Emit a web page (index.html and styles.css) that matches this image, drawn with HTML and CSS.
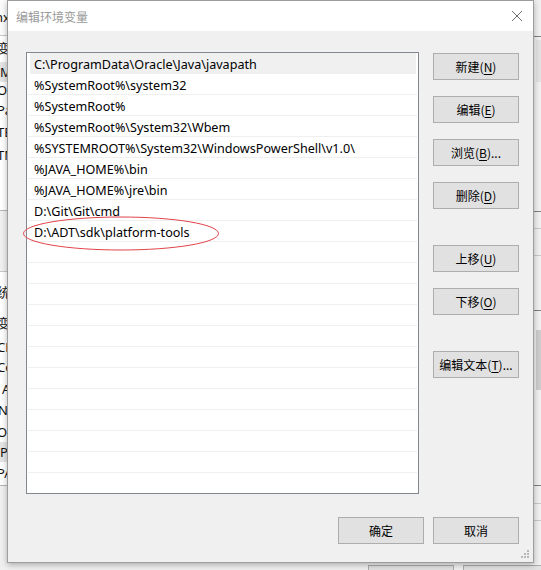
FILE: index.html
```html
<!DOCTYPE html>
<html lang="zh-CN">
<head>
<meta charset="utf-8">
<title>编辑环境变量</title>
<link rel="stylesheet" href="styles.css">
</head>
<body>
<div class="desktop">
  <div class="bgwin">
    <div class="bg-left-top"><span class="bg-t t1">nx</span></div>
    <div class="bg-left-list">
      <span class="bg-t t2">变</span>
      <span class="bg-t t3 hl">M</span>
      <span class="bg-t t4">Or</span>
      <span class="bg-t t5">Pa</span>
      <span class="bg-t t6">TE</span>
      <span class="bg-t t7">TM</span>
    </div>
    <div class="bg-left-gap"></div>
    <div class="bg-left-list2">
      <span class="bg-t u1">统</span>
      <span class="bg-t u2">变</span>
      <span class="bg-t u3">CL</span>
      <span class="bg-t u4">Co</span>
      <span class="bg-t u5">A</span>
      <span class="bg-t u6">N</span>
      <span class="bg-t u7">O</span>
      <span class="bg-t u8 hl">Pa</span>
      <span class="bg-t u9">PA</span>
    </div>
    <div class="bg-right">
      <div class="bg-r-line r1"></div>
      <div class="bg-r-scroll s1"></div>
      <div class="bg-r-line r2"></div>
      <div class="bg-r-line r3"></div>
      <div class="bg-r-line r4"></div>
      <div class="bg-r-line r5"></div>
      <div class="bg-r-scroll s2"></div>
      <div class="bg-r-line r6"></div>
      <div class="bg-r-line r7"></div>
      <div class="bg-r-line r8"></div>
    </div>
    <div class="bg-btn b1"></div>
    <div class="bg-btn b2"></div>
  </div>

  <div class="dialog">
    <div class="titlebar">
      <span class="title">编辑环境变量</span>
      <svg class="close" width="12" height="12" viewBox="0 0 12 12"><path d="M1 1 L11 11 M11 1 L1 11" stroke="#6b6b6b" stroke-width="1" fill="none"/></svg>
    </div>
    <div class="body">
      <div class="main">
        <div class="list">
          <div class="row sel">C:\ProgramData\Oracle\Java\javapath</div>
          <div class="row">%SystemRoot%\system32</div>
          <div class="row">%SystemRoot%</div>
          <div class="row">%SystemRoot%\System32\Wbem</div>
          <div class="row">%SYSTEMROOT%\System32\WindowsPowerShell\v1.0\</div>
          <div class="row">%JAVA_HOME%\bin</div>
          <div class="row">%JAVA_HOME%\jre\bin</div>
          <div class="row">D:\Git\Git\cmd</div>
          <div class="row">D:\ADT\sdk\platform-tools</div>
          <div class="row"></div>
          <div class="row"></div>
          <div class="row"></div>
          <div class="row"></div>
          <div class="row"></div>
          <div class="row"></div>
          <div class="row"></div>
          <div class="row"></div>
          <div class="row"></div>
          <div class="row"></div>
          <div class="row"></div>
          <div class="row last"></div>
        </div>
        <div class="side">
          <button class="btn">新建(<u>N</u>)</button>
          <button class="btn">编辑(<u>E</u>)</button>
          <button class="btn">浏览(<u>B</u>)...</button>
          <button class="btn">删除(<u>D</u>)</button>
          <button class="btn sep">上移(<u>U</u>)</button>
          <button class="btn">下移(<u>O</u>)</button>
          <button class="btn sep">编辑文本(<u>T</u>)...</button>
        </div>
      </div>
      <div class="footer">
        <button class="btn">确定</button>
        <button class="btn">取消</button>
      </div>
    </div>
    <svg class="grip" width="9" height="9" viewBox="0 0 9 9">
      <rect x="6" y="0" width="2" height="2" fill="#b9b9b9"/>
      <rect x="3" y="3" width="2" height="2" fill="#b9b9b9"/>
      <rect x="6" y="3" width="2" height="2" fill="#b9b9b9"/>
      <rect x="0" y="6" width="2" height="2" fill="#b9b9b9"/>
      <rect x="3" y="6" width="2" height="2" fill="#b9b9b9"/>
      <rect x="6" y="6" width="2" height="2" fill="#b9b9b9"/>
    </svg>
  </div>

  <svg class="mark" width="541" height="570" viewBox="0 0 541 570">
    <ellipse cx="121" cy="233.5" rx="97.5" ry="16.5" fill="none" stroke="#e2444a" stroke-width="1"/>
  </svg>
</div>
</body>
</html>
```

FILE: styles.css
```css
* { box-sizing: border-box; }
html, body { margin: 0; padding: 0; }
body {
  width: 541px;
  height: 570px;
  overflow: hidden;
  background: #f0f0f0;
  font-family: "Noto Sans", "Noto Sans CJK SC", sans-serif;
  font-size: 12px;
  color: #000;
}
.desktop {
  position: relative;
  width: 541px;
  height: 570px;
  overflow: hidden;
}

/* background window pieces */
.bgwin { position: absolute; inset: 0; }
.bg-left-top {
  position: absolute; left: 0; top: 0; width: 20px; height: 36px;
  background: #fbfbfb; border-bottom: 1px solid #c8c8c8;
}
.bg-left-list {
  position: absolute; left: 0; top: 36px; width: 20px; height: 175px;
  background: #ffffff; border-bottom: 1px solid #b5b5b5;
}
.bg-left-gap {
  position: absolute; left: 0; top: 211px; width: 20px; height: 61px;
  background: #f0f0f0; border-bottom: 1px solid #c8c8c8;
}
.bg-left-list2 {
  position: absolute; left: 0; top: 272px; width: 20px; height: 214px;
  background: #ffffff; border-bottom: 1px solid #b5b5b5;
}
.bg-t {
  position: absolute; left: -3px; width: 20px; height: 20px; line-height: 20px;
  font-family: "Noto Sans", "Noto Sans CJK SC", sans-serif; font-size: 13px; color: #111;
  white-space: nowrap;
}
.bg-t.hl { background: #e5e5e5; left: 0; padding-left: 0; }
.t1 { top: 7px; left: -5px; }
.t2 { top: 2px; }
.t3 { top: 26px; }
.t4 { top: 44px; }
.t5 { top: 64px; }
.t6 { top: 86px; }
.t7 { top: 109px; }
.u1 { top: 10px; }
.u2 { top: 41px; }
.u3 { top: 65px; }
.u4 { top: 85px; }
.u5 { top: 107px; left: 2px; }
.u6 { top: 128px; left: -2px; }
.u7 { top: 150px; }
.u8 { top: 170px; }
.u9 { top: 191px; }

.bg-right {
  position: absolute; left: 530px; top: 0; width: 11px; height: 570px;
  background: #f0f0f0;
}
.bg-r-line { position: absolute; left: 0; width: 11px; height: 1px; background: #9e9e9e; }
.r1 { top: 36px; background: #808080; }
.r2 { top: 211px; background: #808080; }
.r3 { top: 228px; background: #c8c8c8; }
.r4 { top: 255px; background: #c8c8c8; }
.r5 { top: 310px; background: #808080; }
.r6 { top: 485px; background: #808080; }
.r7 { top: 503px; background: #c8c8c8; }
.r8 { top: 520px; background: #c8c8c8; }
.bg-r-scroll { position: absolute; left: 6px; width: 5px; background: #cdcdcd; }
.s1 { top: 40px; height: 42px; background: #e2e2e2; }
.s2 { top: 330px; height: 60px; }

.bg-btn {
  position: absolute; top: 565px; height: 10px;
  background: #e1e1e1; border: 1px solid #adadad;
}
.b1 { left: 368px; width: 86px; }
.b2 { left: 463px; width: 86px; }

/* dialog */
.dialog {
  position: absolute;
  left: 7px; top: 0;
  width: 527px; height: 563px;
  border: 1px solid #9d9d9d;
  background: #f0f0f0;
  box-shadow: 0 2px 6px rgba(0, 0, 0, 0.28);
  display: flex;
  flex-direction: column;
}
.titlebar {
  height: 30px;
  background: #ffffff;
  display: flex;
  align-items: center;
  justify-content: space-between;
  padding: 0 10px 0 8px;
}
.title {
  font-family: "Noto Sans CJK SC", sans-serif;
  font-size: 12px;
  color: #9a9a9a;
}
.close { display: block; }

.body {
  flex: 1;
  padding: 21px 14px 0 18px;
  display: flex;
  flex-direction: column;
}
.main {
  display: grid;
  grid-template-columns: 393px 86px;
  column-gap: 14px;
}
.list {
  height: 442px;
  border: 1px solid #828790;
  background: #ffffff;
  padding: 0 1px;
  overflow: hidden;
}
.row {
  height: 21px;
  line-height: 20px;
  padding-top: 2px;
  border-bottom: 1px solid #efefef;
  padding-left: 6px;
  white-space: nowrap;
  font-family: "Noto Sans", "Noto Sans CJK SC", sans-serif;
  font-size: 12.6px;
}
.row.sel { background: #f0f0f0; border-bottom-color: #f0f0f0; margin: 0 1px 0 2px; padding-left: 4px; }
.row.last { border-bottom: none; }

.side {
  display: flex;
  flex-direction: column;
  gap: 16px;
  padding-top: 1px;
}
.btn {
  height: 27px;
  width: 86px;
  padding: 0;
  background: #e1e1e1;
  border: 1px solid #adadad;
  border-radius: 0;
  font-family: "Noto Sans CJK SC", sans-serif;
  font-size: 12px;
  color: #000;
  text-align: center;
  line-height: 25px;
}
.btn u { text-underline-offset: 2px; }
.btn.sep { margin-top: 20px; }

.footer {
  display: flex;
  justify-content: flex-end;
  gap: 9px;
  margin-top: 23px;
}

.grip { position: absolute; right: 3px; bottom: 3px; }
.mark { position: absolute; left: 0; top: 0; pointer-events: none; }
```
